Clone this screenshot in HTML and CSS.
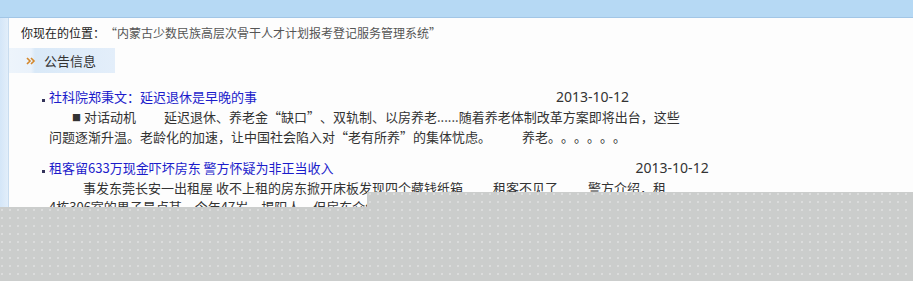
FILE: index.html
```html
<!DOCTYPE html>
<html lang="zh-CN">
<head>
<meta charset="utf-8">
<link rel="stylesheet" href="styles.css">
</head>
<body>
<div class="topbar"></div>
<div class="main">
  <div class="sidebar"></div>
  <div class="content">
    <div class="crumb"><span class="crumb-label">你现在的位置：</span><span class="crumb-path"><span class="q">“</span>内蒙古少数民族高层次骨干人才计划报考登记服务管理系统<span class="q">”</span></span></div>
    <div class="tab">
      <svg class="chev" width="10" height="8" viewBox="0 0 10 8"><path d="M1 1 L4 4 L1 7 M5 1 L8 4 L5 7" fill="none" stroke="#d4872a" stroke-width="1.6"/></svg>
      <span class="tab-text">公告信息</span>
    </div>
    <ul class="news">
      <li class="item">
        <div class="title"><a class="link">社科院郑秉文：延迟退休是早晚的事</a><span class="date d1">2013-10-12</span></div>
        <div class="body">
          <div class="line first1"><span class="sq">■</span> 对话动机<span class="gap g1"></span>延迟退休、养老金<span class="q">“</span>缺口<span class="q">”</span>、双轨制、以房养老......随着养老体制改革方案即将出台，这些</div>
          <div class="line">问题逐渐升温。老龄化的加速，让中国社会陷入对<span class="q">“</span>老有所养<span class="q">”</span>的集体忧虑。<span class="gap g2"></span>养老。。。。。。</div>
        </div>
      </li>
      <li class="item">
        <div class="title"><a class="link">租客留633万现金吓坏房东 警方怀疑为非正当收入</a><span class="date d2">2013-10-12</span></div>
        <div class="body">
          <div class="line first2">事发东莞长安一出租屋 收不上租的房东掀开床板发现四个藏钱纸箱<span class="gap"></span>租客不见了<span class="gap"></span>警方介绍，租</div>
          <div class="line">4栋306室的男子是卢某，今年47岁，揭阳人。但房东介绍说，他已经很久没有回来了。</div>
        </div>
      </li>
    </ul>
  </div>
</div>
<div class="mask mask-top"></div>
<div class="mask mask-bottom"></div>
</body>
</html>
```
FILE: styles.css
```css
html, body {
  margin: 0;
  padding: 0;
}
body {
  position: relative;
  width: 913px;
  height: 281px;
  overflow: hidden;
  background: #fdfdfd;
  font-family: "Noto Sans CJK SC", "Microsoft YaHei", sans-serif;
  font-size: 13px;
  color: #333;
  text-spacing-trim: space-all;
}
.q {
  font-feature-settings: "fwid";
}
.topbar {
  height: 17px;
  background: #b6d9f4;
  border-bottom: 1px solid #a2c6e6;
}
.main {
  display: flex;
  height: 263px;
}
.sidebar {
  width: 8px;
  background: linear-gradient(to right, #d4e6f8, #e2eefa);
  border-right: 1px solid #c8dcef;
}
.content {
  flex: 1;
  padding-left: 12px;
}
.crumb {
  height: 30px;
  line-height: 30px;
  font-size: 12px;
  white-space: nowrap;
}
.crumb-label {
  color: #222;
}
.crumb-path {
  color: #555;
}
.tab {
  margin-left: -12px;
  width: 106px;
  height: 25px;
  display: flex;
  align-items: center;
  background: linear-gradient(to right, #edf4fb 0px, #eaf2fb 22px, #d9e9f8 26px, #e3eefa 106px);
}
.chev {
  margin-left: 17px;
  margin-top: 1px;
}
.tab-text {
  margin-left: 8px;
  color: #333;
  font-size: 13px;
  line-height: 25px;
}
.news {
  list-style: none;
  margin: 14px 0 0 0;
  padding: 0 0 0 28px;
}
.item {
  margin-bottom: 12px;
}
.title {
  position: relative;
  height: 20px;
  line-height: 20px;
  white-space: nowrap;
}
.title::before {
  content: "";
  position: absolute;
  left: -7px;
  top: 12px;
  width: 3px;
  height: 3px;
  background: #33335a;
}
.link {
  color: #1c1ccb;
}
.date {
  color: #333;
  font-family: "Noto Sans", sans-serif;
  font-size: 14px;
}
.d1 { margin-left: 299px; }
.d2 { margin-left: 302px; }
.body {
  line-height: 19px;
  white-space: nowrap;
}
.sq {
  font-size: 9px;
  vertical-align: 1px;
  color: #333;
}
.first1 { padding-left: 23px; }
.first2 { padding-left: 34px; }
.gap {
  display: inline-block;
  width: 30px;
}
.g1 { width: 28px; }
.g2 { width: 31px; }
.mask {
  position: absolute;
  background-color: #cbcdcc;
  background-image:
    radial-gradient(circle at 2px 2px, #ececec 0.6px, transparent 0.8px),
    radial-gradient(circle at 3px 3px, #9a9c9b 0.5px, transparent 0.7px);
  background-size: 8px 8px;
}
.mask-top {
  left: 367px;
  top: 192px;
  right: 0;
  height: 15px;
  background-position: -367px -192px;
}
.mask-bottom {
  left: 0;
  top: 207px;
  right: 0;
  bottom: 0;
  background-position: 0 -207px;
}
```
